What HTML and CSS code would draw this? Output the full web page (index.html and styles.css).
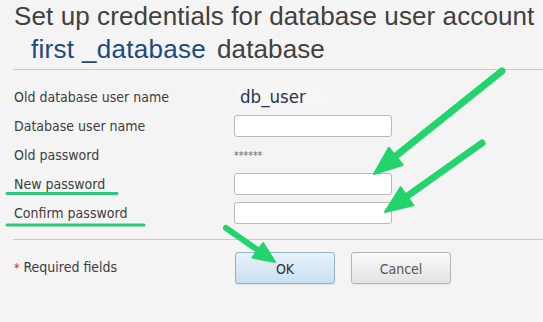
FILE: index.html
```html
<!DOCTYPE html>
<html>
<head>
<meta charset="utf-8">
<link rel="stylesheet" href="styles.css">
</head>
<body>
<div class="page">
  <h1 class="title">
    <div class="title-line">Set up credentials for database user account</div>
    <div class="title-line second"><span class="dbname">first _database</span><span class="dbword">database</span></div>
  </h1>
  <div class="rule"></div>
  <div class="form">
    <div class="label">Old database user name</div>
    <div class="value"><span class="username">db_user</span></div>
    <div class="label">Database user name</div>
    <div class="value"><input class="field" type="text"></div>
    <div class="label">Old password</div>
    <div class="value"><span class="stars">******</span></div>
    <div class="label">New password</div>
    <div class="value"><input class="field" type="password"></div>
    <div class="label">Confirm password</div>
    <div class="value"><input class="field" type="password"></div>
  </div>
  <div class="rule rule-bottom"></div>
  <div class="footer">
    <div class="required"><span class="star">*</span> Required fields</div>
    <div class="buttons">
      <button class="btn btn-ok">OK</button>
      <button class="btn btn-cancel">Cancel</button>
    </div>
  </div>
</div>
<svg class="annotations" width="543" height="322" viewBox="0 0 543 322">
  <g stroke="#2cc97e" stroke-width="3" stroke-linecap="round">
    <line x1="7" y1="193.5" x2="117" y2="193.5"/>
    <line x1="7" y1="225" x2="144" y2="225"/>
  </g>
  <g stroke="#22d46c" stroke-linecap="round" fill="#22d46c">
    <line x1="502" y1="71" x2="397" y2="155" stroke-width="7"/>
    <polygon points="374,174 402.7,165 388.9,147.8" stroke-width="2" stroke-linejoin="round"/>
    <line x1="482" y1="143" x2="408" y2="195.5" stroke-width="7"/>
    <polygon points="385,212 413.4,205.3 400.6,187.3" stroke-width="2" stroke-linejoin="round"/>
    <line x1="226" y1="228" x2="259" y2="251" stroke-width="6"/>
    <polygon points="275,262 252.5,257.6 263.1,243" stroke-width="2" stroke-linejoin="round"/>
  </g>
</svg>
</body>
</html>
```
FILE: styles.css
```css
html, body {
  margin: 0;
  padding: 0;
  background: #f4f4f4;
}
body {
  position: relative;
  width: 543px;
  height: 322px;
  overflow: hidden;
}
.page {
  padding-left: 14px;
}
.title {
  margin: 0;
  font-family: "Liberation Sans", Arial, sans-serif;
  font-weight: normal;
  font-size: 26px;
  line-height: 33px;
  letter-spacing: 0.1px;
  color: #404040;
  white-space: nowrap;
}
.title-line.second {
  padding-left: 17px;
}
.dbname {
  color: #1b4a80;
  letter-spacing: 0.3px;
}
.dbword {
  margin-left: 11px;
}
.rule {
  margin-top: 3px;
  margin-left: -1px;
  border-top: 1px solid #c9c9c9;
}
.rule-bottom {
  margin-top: 12px;
}
.form {
  margin-top: 12px;
  display: grid;
  grid-template-columns: 220px auto;
  grid-auto-rows: 29px;
  align-items: center;
  font-family: "DejaVu Sans Condensed", "DejaVu Sans", Verdana, sans-serif;
  font-stretch: condensed;
  font-size: 14px;
  color: #3d3d3d;
}
.label {
  white-space: nowrap;
}
.value {
  display: flex;
  align-items: center;
}
.username {
  font-size: 18.5px;
  color: #1f3556;
  padding: 0 22px 0 6px;
  border-radius: 11px;
  background: #f6f6f6;
}
.stars {
  font-size: 10.5px;
  color: #666;
}
.field {
  box-sizing: border-box;
  width: 158px;
  height: 22px;
  margin: 0;
  padding: 0 4px;
  border: 1px solid #b9b9b9;
  border-radius: 3px;
  background: #fff;
  outline: none;
}
.footer {
  margin-top: 12px;
  display: grid;
  grid-template-columns: 220px auto;
  align-items: center;
  font-family: "DejaVu Sans Condensed", "DejaVu Sans", Verdana, sans-serif;
  font-stretch: condensed;
  font-size: 14px;
  color: #3d3d3d;
}
.required {
  margin-top: -3px;
}
.star {
  color: #c0392b;
  font-size: 12px;
}
.buttons {
  display: flex;
  gap: 16px;
  padding-left: 1px;
}
.btn {
  box-sizing: border-box;
  width: 100px;
  height: 32px;
  margin: 0;
  padding: 2px 0 0;
  border-radius: 3px;
  font-family: "DejaVu Sans Condensed", "DejaVu Sans", Verdana, sans-serif;
  font-stretch: condensed;
  font-size: 14px;
  cursor: pointer;
}
.btn-ok {
  border: 1px solid #93b3cf;
  background: linear-gradient(#e8f2fa, #c9dff0);
  color: #2f2f2f;
  box-shadow: 0 1px 1px rgba(0, 0, 0, 0.08);
}
.btn-cancel {
  border: 1px solid #b4b4b4;
  background: linear-gradient(#f9f9f9, #e3e3e3);
  color: #555;
  box-shadow: 0 1px 1px rgba(0, 0, 0, 0.06);
}
.annotations {
  position: absolute;
  top: 0;
  left: 0;
  pointer-events: none;
}
```
